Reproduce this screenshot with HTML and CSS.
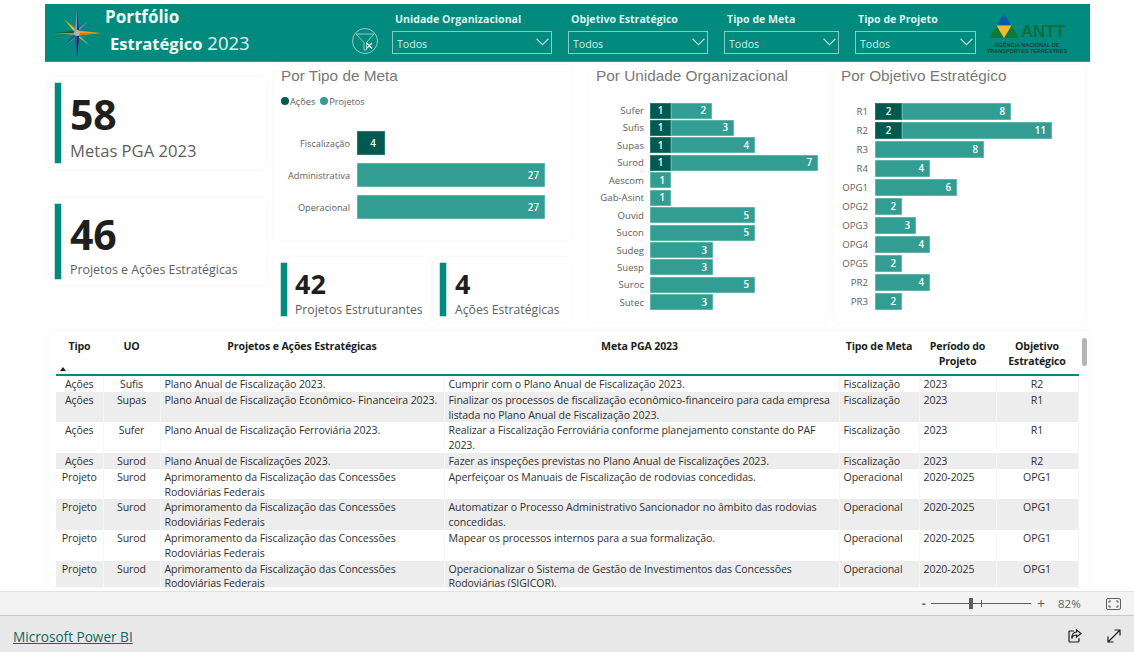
FILE: index.html
```html
<!DOCTYPE html>
<html lang="pt-BR">
<head>
<meta charset="utf-8">
<title>Portfólio Estratégico 2023</title>
<link rel="stylesheet" href="styles.css">
</head>
<body>
<main class="report">
  <header class="banner">
    <svg class="compass" viewBox="0 0 50 50" aria-hidden="true">
      <polygon points="38,12 27.5,22 26,21" fill="#6f93b8"/>
      <polygon points="38,12 29,24 27.5,22" fill="#2f6f9a"/>
      <polygon points="12,11 24,22 22.5,24" fill="#f0c419"/>
      <polygon points="12,11 25,21 24,22" fill="#8a9a3a"/>
      <polygon points="12,38 22.5,26 24,28" fill="#24508f"/>
      <polygon points="12,38 24,28 25,29" fill="#5f86b8"/>
      <polygon points="38,38 27,28 28.5,26" fill="#3d8f6f"/>
      <polygon points="38,38 26,29 27,28" fill="#8fc0a8"/>
      <polygon points="25,1 27.5,25 22.5,25" fill="#23407f"/>
      <polygon points="25,1 25,25 22.5,25" fill="#7f9ac0"/>
      <polygon points="25,49 22.5,25 27.5,25" fill="#2b4f9a"/>
      <polygon points="25,49 25,25 27.5,25" fill="#16306a"/>
      <polygon points="49,25 25,22.5 25,27.5" fill="#f39c12"/>
      <polygon points="49,25 25,25 25,27.5" fill="#d97b0a"/>
      <polygon points="1,25 25,22.5 25,27.5" fill="#1d5b35"/>
      <polygon points="1,25 25,25 25,27.5" fill="#7aa05a"/>
      <circle cx="25" cy="25" r="3" fill="#a8b4b0"/>
    </svg>
    <div class="brand">
      <div class="brand-top">Portfólio</div>
      <div class="brand-bottom"><b>Estratégico</b> 2023</div>
    </div>
    <svg class="clear-filter" viewBox="0 0 28 28" aria-hidden="true">
      <circle cx="14" cy="14" r="12.5"/>
      <path d="M5 7 H23 L15.5 15.5 V23 H13 V15.5 Z"/>
      <path class="x" d="M15.5 16 L21 21.5 M21 16 L15.5 21.5"/>
    </svg>
    <div class="slicers">
      <div class="slicer w1">
        <div class="slicer-label">Unidade Organizacional</div>
        <div class="select"><span>Todos</span><svg class="chev" viewBox="0 0 12 7"><path d="M.5 .5 L6 6 L11.5 .5"/></svg></div>
      </div>
      <div class="slicer w2">
        <div class="slicer-label">Objetivo Estratégico</div>
        <div class="select"><span>Todos</span><svg class="chev" viewBox="0 0 12 7"><path d="M.5 .5 L6 6 L11.5 .5"/></svg></div>
      </div>
      <div class="slicer w3">
        <div class="slicer-label">Tipo de Meta</div>
        <div class="select"><span>Todos</span><svg class="chev" viewBox="0 0 12 7"><path d="M.5 .5 L6 6 L11.5 .5"/></svg></div>
      </div>
      <div class="slicer w4">
        <div class="slicer-label">Tipo de Projeto</div>
        <div class="select"><span>Todos</span><svg class="chev" viewBox="0 0 12 7"><path d="M.5 .5 L6 6 L11.5 .5"/></svg></div>
      </div>
    </div>
    <div class="antt">
      <div class="antt-mark">
        <svg class="antt-tri" viewBox="0 0 30 25" aria-hidden="true">
          <polygon points="15,0 22.5,12.5 7.5,12.5" fill="#0a5cab"/>
          <polygon points="7.5,12.5 15,25 0,25" fill="#0f7a3c"/>
          <polygon points="22.5,12.5 30,25 15,25" fill="#0f7a3c"/>
          <polygon points="7.5,12.5 22.5,12.5 15,25" fill="#f5b82e"/>
        </svg>
        <span class="antt-name">ANTT</span>
      </div>
      <div class="antt-sub">AGÊNCIA NACIONAL DE<br>TRANSPORTES TERRESTRES</div>
    </div>
  </header>

  <section class="dash">
    <div class="col-kpi">
      <div class="card kpi kpi-a">
        <div class="accent"></div>
        <div><div class="num num-xl">58</div><div class="lbl lbl-xl">Metas PGA 2023</div></div>
      </div>
      <div class="card kpi kpi-b">
        <div class="accent"></div>
        <div><div class="num num-xl">46</div><div class="lbl lbl-m">Projetos e Ações Estratégicas</div></div>
      </div>
    </div>

    <div class="col-mid">
      <div class="card chart-meta">
        <h2 class="chart-title">Por Tipo de Meta</h2>
        <div class="legend">
          <span class="dot dark"></span><span>Ações</span>
          <span class="dot light"></span><span>Projetos</span>
        </div>
        <div class="meta-rows">
          <div class="brow"><span class="blabel">Fiscalização</span><span class="seg dark" style="width:28px">4</span></div>
          <div class="brow"><span class="blabel">Administrativa</span><span class="seg light" style="width:188px">27</span></div>
          <div class="brow"><span class="blabel">Operacional</span><span class="seg light" style="width:188px">27</span></div>
        </div>
      </div>
      <div class="kpi-row">
        <div class="card kpi kpi-c">
          <div class="accent"></div>
          <div><div class="num num-m">42</div><div class="lbl lbl-s">Projetos Estruturantes</div></div>
        </div>
        <div class="card kpi kpi-d">
          <div class="accent"></div>
          <div><div class="num num-m">4</div><div class="lbl lbl-s">Ações Estratégicas</div></div>
        </div>
      </div>
    </div>

    <div class="card chart-uo">
      <h2 class="chart-title">Por Unidade Organizacional</h2>
      <div class="rows rows-uo">
        <div class="brow"><span class="blabel">Sufer</span><span class="seg dark" style="width:21px">1</span><span class="seg light" style="width:41px">2</span></div>
        <div class="brow"><span class="blabel">Sufis</span><span class="seg dark" style="width:21px">1</span><span class="seg light" style="width:63px">3</span></div>
        <div class="brow"><span class="blabel">Supas</span><span class="seg dark" style="width:21px">1</span><span class="seg light" style="width:84px">4</span></div>
        <div class="brow"><span class="blabel">Surod</span><span class="seg dark" style="width:21px">1</span><span class="seg light" style="width:147px">7</span></div>
        <div class="brow"><span class="blabel">Aescom</span><span class="seg light" style="width:21px">1</span></div>
        <div class="brow"><span class="blabel">Gab-Asint</span><span class="seg light" style="width:21px">1</span></div>
        <div class="brow"><span class="blabel">Ouvid</span><span class="seg light" style="width:105px">5</span></div>
        <div class="brow"><span class="blabel">Sucon</span><span class="seg light" style="width:105px">5</span></div>
        <div class="brow"><span class="blabel">Sudeg</span><span class="seg light" style="width:63px">3</span></div>
        <div class="brow"><span class="blabel">Suesp</span><span class="seg light" style="width:63px">3</span></div>
        <div class="brow"><span class="blabel">Suroc</span><span class="seg light" style="width:105px">5</span></div>
        <div class="brow"><span class="blabel">Sutec</span><span class="seg light" style="width:63px">3</span></div>
      </div>
    </div>

    <div class="card chart-obj">
      <h2 class="chart-title">Por Objetivo Estratégico</h2>
      <div class="rows rows-obj">
        <div class="brow"><span class="blabel">R1</span><span class="seg dark" style="width:27px">2</span><span class="seg light" style="width:109px">8</span></div>
        <div class="brow"><span class="blabel">R2</span><span class="seg dark" style="width:27px">2</span><span class="seg light" style="width:150px">11</span></div>
        <div class="brow"><span class="blabel">R3</span><span class="seg light" style="width:109px">8</span></div>
        <div class="brow"><span class="blabel">R4</span><span class="seg light" style="width:55px">4</span></div>
        <div class="brow"><span class="blabel">OPG1</span><span class="seg light" style="width:82px">6</span></div>
        <div class="brow"><span class="blabel">OPG2</span><span class="seg light" style="width:27px">2</span></div>
        <div class="brow"><span class="blabel">OPG3</span><span class="seg light" style="width:41px">3</span></div>
        <div class="brow"><span class="blabel">OPG4</span><span class="seg light" style="width:55px">4</span></div>
        <div class="brow"><span class="blabel">OPG5</span><span class="seg light" style="width:27px">2</span></div>
        <div class="brow"><span class="blabel">PR2</span><span class="seg light" style="width:55px">4</span></div>
        <div class="brow"><span class="blabel">PR3</span><span class="seg light" style="width:27px">2</span></div>
      </div>
    </div>
  </section>

  <section class="card table-card">
    <table class="grid">
      <colgroup>
        <col class="c1"><col class="c2"><col class="c3"><col class="c4"><col class="c5"><col class="c6"><col class="c7">
      </colgroup>
      <thead>
        <tr>
          <th class="sorted">Tipo<span class="sort-arrow"></span></th>
          <th>UO</th>
          <th>Projetos e Ações Estratégicas</th>
          <th>Meta PGA 2023</th>
          <th>Tipo de Meta</th>
          <th>Período do Projeto</th>
          <th>Objetivo Estratégico</th>
        </tr>
      </thead>
      <tbody>
        <tr><td class="ctr">Ações</td><td class="ctr">Sufis</td><td>Plano Anual de Fiscalização 2023.</td><td>Cumprir com o Plano Anual de Fiscalização 2023.</td><td>Fiscalização</td><td>2023</td><td class="ctr">R2</td></tr>
        <tr><td class="ctr">Ações</td><td class="ctr">Supas</td><td>Plano Anual de Fiscalização Econômico- Financeira 2023.</td><td>Finalizar os processos de fiscalização econômico-financeiro para cada empresa listada no Plano Anual de Fiscalização 2023.</td><td>Fiscalização</td><td>2023</td><td class="ctr">R1</td></tr>
        <tr><td class="ctr">Ações</td><td class="ctr">Sufer</td><td>Plano Anual de Fiscalização Ferroviária 2023.</td><td>Realizar a Fiscalização Ferroviária conforme planejamento constante do PAF 2023.</td><td>Fiscalização</td><td>2023</td><td class="ctr">R1</td></tr>
        <tr><td class="ctr">Ações</td><td class="ctr">Surod</td><td>Plano Anual de Fiscalizações 2023.</td><td>Fazer as inspeções previstas no Plano Anual de Fiscalizações 2023.</td><td>Fiscalização</td><td>2023</td><td class="ctr">R2</td></tr>
        <tr><td class="ctr">Projeto</td><td class="ctr">Surod</td><td>Aprimoramento da Fiscalização das Concessões Rodoviárias Federais</td><td>Aperfeiçoar os Manuais de Fiscalização de rodovias concedidas.</td><td>Operacional</td><td>2020-2025</td><td class="ctr">OPG1</td></tr>
        <tr><td class="ctr">Projeto</td><td class="ctr">Surod</td><td>Aprimoramento da Fiscalização das Concessões Rodoviárias Federais</td><td>Automatizar o Processo Administrativo Sancionador no âmbito das rodovias concedidas.</td><td>Operacional</td><td>2020-2025</td><td class="ctr">OPG1</td></tr>
        <tr><td class="ctr">Projeto</td><td class="ctr">Surod</td><td>Aprimoramento da Fiscalização das Concessões Rodoviárias Federais</td><td>Mapear os processos internos para a sua formalização.</td><td>Operacional</td><td>2020-2025</td><td class="ctr">OPG1</td></tr>
        <tr><td class="ctr">Projeto</td><td class="ctr">Surod</td><td>Aprimoramento da Fiscalização das Concessões Rodoviárias Federais</td><td>Operacionalizar o Sistema de Gestão de Investimentos das Concessões Rodoviárias (SIGICOR).</td><td>Operacional</td><td>2020-2025</td><td class="ctr">OPG1</td></tr>
      </tbody>
    </table>
    <div class="scroll-thumb"></div>
  </section>
</main>

<div class="zoom-bar">
  <span class="zoom-minus">-</span>
  <div class="slider"><span class="slider-tick"></span><span class="slider-thumb"></span></div>
  <span class="zoom-plus">+</span>
  <span class="zoom-value">82%</span>
  <svg class="fit" viewBox="0 0 15 12" aria-hidden="true">
    <rect x=".5" y=".5" width="14" height="11" rx="1.5"/>
    <path d="M3 5 V3 H5 M10 3 H12 V5 M12 7 V9 H10 M5 9 H3 V7"/>
  </svg>
</div>
<footer class="pbi-bar">
  <a class="pbi-link" href="#">Microsoft Power BI</a>
  <div class="pbi-actions">
    <svg class="pbi-icon" viewBox="0 0 14 14" aria-hidden="true">
      <path d="M6 2 H2 Q1 2 1 3 V12 Q1 13 2 13 H10 Q11 13 11 12 V9"/>
      <path d="M8.5 1 L13 4.5 L8.5 8 V6 Q5 6 3.8 9.5 Q3.8 3.2 8.5 3 Z"/>
    </svg>
    <svg class="pbi-icon" viewBox="0 0 14 14" aria-hidden="true">
      <path d="M1 13 L13 1 M7.5 1 H13 V6.5 M1 7.5 V13 H6.5"/>
    </svg>
  </div>
</footer>
</body>
</html>
```
FILE: styles.css
```css
* { box-sizing: border-box; }
html, body { margin: 0; height: 652px; overflow: hidden; }
body {
  display: flex;
  flex-direction: column;
  background: #fff;
  font-family: "Open Sans", "Noto Sans", sans-serif;
  color: #252423;
}

.report { height: 592px; padding-top: 4px; overflow: hidden; }

/* banner */
.banner {
  display: flex;
  align-items: flex-start;
  width: 1045px;
  height: 57px;
  margin-left: 45px;
  background: #008b7e;
  color: #fff;
  box-shadow: 0 1px 0 #2a9c90;
}
.compass { width: 50px; height: 50px; margin: 4px 0 0 7px; flex: none; }
.brand { width: 247px; margin-left: 3px; flex: none; }
.brand-top { font-size: 17px; font-weight: 700; line-height: 20px; margin-top: 3px; color: #f4fbfa; }
.brand-bottom { font-size: 18.5px; line-height: 24px; margin: 4px 0 0 5px; color: #e6f5f3; white-space: nowrap; }
.brand-bottom b { font-size: 16.6px; color: #f4fbfa; }
.clear-filter { width: 28px; height: 28px; margin: 23px 0 0 -1px; flex: none; fill: none; stroke: #b9e0da; stroke-width: .8; }
.clear-filter .x { stroke: #fff; stroke-width: 1.1; }

.slicers { display: flex; gap: 16px; margin-left: 13px; flex: none; }
.w1 { width: 160px; }
.w2 { width: 140px; }
.w3 { width: 115px; }
.w4 { width: 121px; }
.slicer-label {
  font-size: 10.6px;
  font-weight: 700;
  line-height: 14px;
  margin: 8px 0 5px 3px;
  color: #dff2ef;
  white-space: nowrap;
}
.select {
  display: flex;
  align-items: center;
  justify-content: space-between;
  height: 23px;
  padding: 2px 1px 0 4px;
  border: 1.5px solid #8ccbc3;
  font-size: 10.6px;
  color: #d5eeea;
}
.chev { width: 13px; height: 8px; margin: -4px 1px 0 0; fill: none; stroke: #bfe3de; stroke-width: 1; }

.antt { margin: 9px 0 0 11px; flex: none; width: 80px; color: #17493f; }
.antt-mark { display: flex; align-items: flex-end; height: 25px; }
.antt-tri { width: 30px; height: 25px; flex: none; margin-left: 2px; }
.antt-name {
  font-family: "Liberation Sans", sans-serif;
  font-size: 17px;
  font-weight: 700;
  line-height: 12px;
  letter-spacing: -.3px;
  margin-left: 2px;
  color: #0f6e3c;
}
.antt-sub {
  font-family: "Liberation Sans", sans-serif;
  font-size: 5.5px;
  font-weight: 700;
  line-height: 6px;
  margin-top: 4px;
  text-align: center;
  white-space: nowrap;
  color: #17433b;
}

/* dashboard */
.dash {
  display: flex;
  height: 257px;
  margin: 4px 0 0 49px;
}
.card {
  background: #fff;
  border-radius: 5px;
  box-shadow: 0 0 6px rgba(0, 0, 0, .04);
}
.col-kpi {
  display: flex;
  flex-direction: column;
  gap: 29px;
  width: 217px;
  padding-top: 12px;
  flex: none;
}
.kpi { display: flex; gap: 9px; padding: 6px; }
.kpi-a { height: 92px; }
.kpi-b { height: 87px; }
.accent { width: 6px; background: #008b7e; flex: none; box-shadow: 0 0 0 .5px #7cc5bc; }
.num { font-weight: 700; color: #201f1e; }
.num-xl { font-size: 41px; line-height: 52px; margin-top: 5px; letter-spacing: -.3px; }
.kpi-b .num-xl { margin-top: 4px; }
.num-m { font-size: 27px; line-height: 36px; margin-top: 3px; }
.lbl { color: #605e5c; white-space: nowrap; }
.lbl-xl { font-size: 16.6px; line-height: 22px; margin-top: 0; }
.lbl-m { font-size: 12.4px; line-height: 18px; margin-top: 1px; }
.lbl-s { font-size: 12.2px; line-height: 18px; margin-top: -1px; }

.col-mid { width: 297px; margin-left: 8px; flex: none; }
.chart-meta { height: 175px; padding: 2px 0 0 7px; border-radius: 0 0 5px 5px; }
.chart-title {
  font-family: "Liberation Sans", Arial, sans-serif;
  font-size: 15.35px;
  font-weight: 400;
  line-height: 18px;
  margin: 0;
  color: #7a7876;
  white-space: nowrap;
}
.legend {
  display: flex;
  align-items: center;
  height: 14px;
  margin-top: 9px;
  font-size: 9.2px;
  color: #605e5c;
}
.legend span:nth-child(3) { margin-left: 5px; }
.dot { width: 8px; height: 8px; border-radius: 50%; margin-right: 1px; }
.dot.dark { background: #005a50; }
.dot.light { background: #329d92; }

.meta-rows { display: flex; flex-direction: column; gap: 8px; margin-top: 23px; }
.meta-rows .brow { height: 24px; }
.meta-rows .blabel { width: 69px; margin-right: 7px; font-size: 9.2px; }
.meta-rows .seg { height: 24px; padding-right: 6px; }
.meta-rows .seg.dark { padding-right: 6px; justify-content: center; padding-left: 10px; }

.rows { display: flex; flex-direction: column; }
.brow { display: flex; align-items: center; }
.blabel {
  flex: none;
  text-align: right;
  font-size: 9.6px;
  color: #605e5c;
  white-space: nowrap;
}
.seg {
  display: flex;
  align-items: center;
  justify-content: flex-end;
  flex: none;
  padding-right: 6px;
  font-size: 9.8px;
  font-weight: 600;
  color: #fff;
}
.seg.dark { background: #005a50; justify-content: center; padding: 0; box-shadow: inset 0 0 0 1px #2b7a70; }
.seg.light { background: #329d92; box-shadow: inset 0 0 0 .5px #8dcbc4; }

.kpi-row { display: flex; gap: 4px; margin-top: 17px; }
.kpi-c { width: 156px; height: 65px; padding-left: 7px; }
.kpi-d { width: 137px; height: 65px; }
.kpi-row .kpi-c { gap: 8px; }
.kpi-row .kpi-d { gap: 9px; }

.chart-uo { width: 239px; height: 257px; margin-left: 18px; padding: 2px 0 0 7px; flex: none; }
.rows-uo { margin-top: 17.5px; gap: 1.45px; }
.rows-uo .brow { height: 16px; }
.rows-uo .blabel { width: 48px; margin-right: 6px; }
.rows-uo .seg { height: 16px; }

.chart-obj { width: 251px; height: 257px; margin-left: 6px; padding: 2px 0 0 7px; flex: none; }
.rows-obj { margin-top: 18px; gap: 2px; }
.rows-obj .brow { height: 17px; }
.rows-obj .blabel { width: 27px; margin-right: 7px; }
.rows-obj .seg { height: 17px; }

/* table */
.table-card {
  position: relative;
  width: 1039px;
  height: 256px;
  margin: 9px 0 0 49px;
  padding: 0 0 0 7px;
  overflow: hidden;
  border-radius: 0;
}
.grid {
  width: 1022px;
  table-layout: fixed;
  border-collapse: collapse;
  font-size: 10.6px;
  line-height: 14.8px;
  letter-spacing: -.1px;
}
.c1 { width: 47px; }
.c2 { width: 57px; }
.c3 { width: 284px; }
.c4 { width: 395px; }
.c5 { width: 80px; }
.c6 { width: 77px; }
.c7 { width: 82px; }
.grid th {
  position: relative;
  height: 44px;
  padding: 8px 0 0;
  vertical-align: top;
  text-align: center;
  font-weight: 700;
  letter-spacing: -.14px;
  color: #201f1e;
  border-bottom: 2px solid #008b7e;
}
.grid th:nth-child(4) { padding-right: 4px; }
.grid th:nth-child(6), .grid th:nth-child(7) { padding: 8px 8px 0; }
.sort-arrow {
  position: absolute;
  left: 4px;
  bottom: 3px;
  width: 0;
  height: 0;
  border: 3.5px solid transparent;
  border-top: 0;
  border-bottom: 4px solid #201f1e;
}
.grid td {
  padding: 1px 4px 0;
  vertical-align: top;
  color: #323130;
  border-right: 1px solid #f6f6f6;
}
.grid td.ctr { text-align: center; }
.grid tbody tr:nth-child(even) td { background: #ededed; }
.scroll-thumb {
  position: absolute;
  right: 1px;
  top: 7px;
  width: 5px;
  height: 28px;
  border-radius: 3px;
  background: #b3b3b3;
}

/* bottom bars */
.zoom-bar {
  display: flex;
  align-items: center;
  height: 24px;
  padding-left: 922px;
  background: #f3f3f3;
  border-top: 1px solid #e1e1e1;
  font-size: 11.5px;
  color: #605e5c;
}
.zoom-minus { width: 9px; font-weight: 700; }
.slider { position: relative; width: 100px; height: 1px; background: #605e5c; }
.slider-tick { position: absolute; left: 50px; top: -3px; width: 1px; height: 7px; background: #605e5c; }
.slider-thumb { position: absolute; left: 38px; top: -5px; width: 4px; height: 11px; background: #605e5c; }
.zoom-plus { margin-left: 6px; font-size: 14px; width: 21px; }
.zoom-value { width: 48px; }
.fit { width: 15px; height: 12px; fill: none; stroke: #605e5c; stroke-width: 1; }

.pbi-bar {
  display: flex;
  align-items: center;
  justify-content: space-between;
  height: 37px;
  padding: 4px 13px 0;
  background: #e8e8e8;
  border-top: 1px solid #c8c8c8;
}
.pbi-link { font-size: 13.6px; color: #0b6a5c; text-decoration: underline; }
.pbi-actions { display: flex; gap: 25px; }
.pbi-icon { width: 14px; height: 14px; fill: none; stroke: #201f1e; stroke-width: 1.2; }
```
